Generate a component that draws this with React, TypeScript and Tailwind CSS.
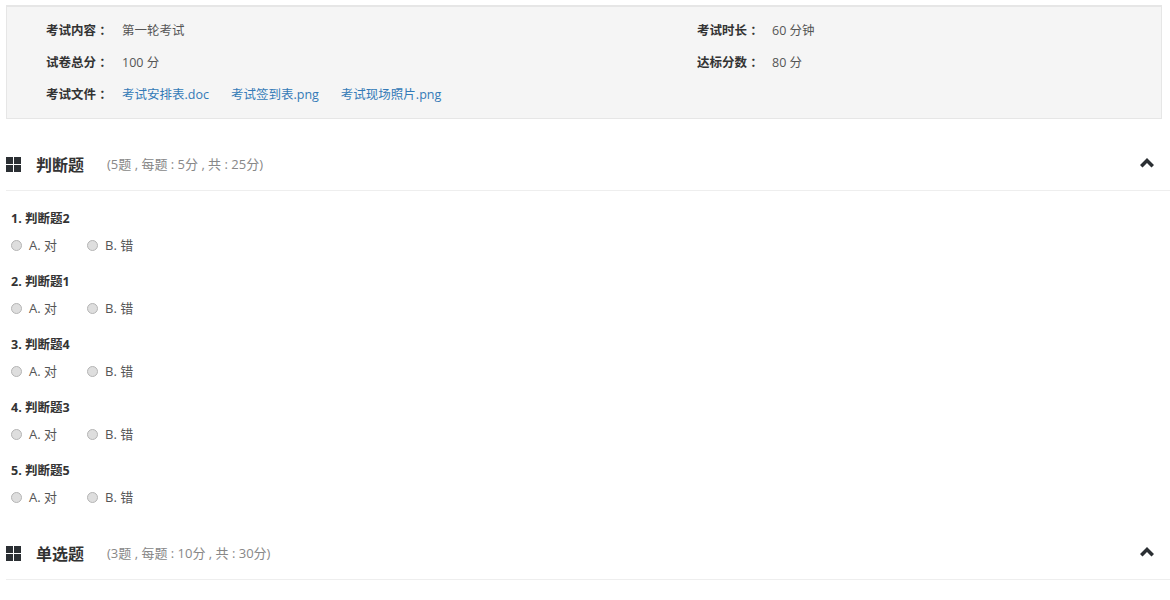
import React from "react";

const font = "font-['Open_Sans','Noto_Sans_CJK_SC',sans-serif]";

function InfoLabel({ children, w = "w-[76px]" }: { children: React.ReactNode; w?: string }) {
  return <span className={`${w} shrink-0 font-bold text-[#333]`}>{children} ：</span>;
}

function GridIcon() {
  return (
    <svg width="15" height="15" viewBox="0 0 15 15" className="mb-[1px] shrink-0">
      <rect x="0" y="0" width="7" height="7" fill="#2b2f33" />
      <rect x="8" y="0" width="7" height="7" fill="#2b2f33" />
      <rect x="0" y="8" width="7" height="7" fill="#2b2f33" />
      <rect x="8" y="8" width="7" height="7" fill="#2b2f33" />
    </svg>
  );
}

function ChevronUp() {
  return (
    <svg width="14" height="10" viewBox="0 0 14 10" className="mb-[3px] ml-auto shrink-0">
      <polygon points="7,0 14,7 11.5,9.5 7,5 2.5,9.5 0,7" fill="#2b2f33" />
    </svg>
  );
}

function SectionHeader({ title, sub }: { title: string; sub: string }) {
  return (
    <div className="flex h-[52px] items-center border-b border-[#eeeeee] pr-[16px]">
      <GridIcon />
      <span className="ml-[15px] text-[16px] font-bold text-[#333]">{title}</span>
      <span className="ml-[23px] text-[13px] text-[#888]">{sub}</span>
      <ChevronUp />
    </div>
  );
}

function Radio({ label }: { label: string }) {
  return (
    <span className="flex items-center">
      <span className="h-[11px] w-[11px] rounded-full border border-[#b5b5b5] bg-[#dedede]" />
      <span className="ml-[7px] text-[13px] text-[#555]">{label}</span>
    </span>
  );
}

function Question({ title }: { title: string }) {
  return (
    <div className="h-[63px] pl-[5px]">
      <div className="flex h-[27px] items-center pt-[2px] text-[12.5px] font-bold text-[#333]">{title}</div>
      <div className="flex h-[27px] items-center">
        <div className="w-[76px]">
          <Radio label="A. 对" />
        </div>
        <Radio label="B. 错" />
      </div>
    </div>
  );
}

export default function App() {
  return (
    <div className={`${font} h-[600px] w-[1170px] overflow-hidden bg-white pl-[6px] pt-[5px]`}>
      <div className="mr-[8px] h-[114px] border border-t-2 border-[#e6e6e6] bg-[#f5f5f5] pl-[39px] pt-[8px] text-[12.5px] text-[#555]">
        <div className="flex h-[32px] items-center">
          <div className="flex w-[651px] items-center">
            <InfoLabel>考试内容</InfoLabel>
            <span>第一轮考试</span>
          </div>
          <InfoLabel w="w-[75px]">考试时长</InfoLabel>
          <span>60 分钟</span>
        </div>
        <div className="flex h-[32px] items-center">
          <div className="flex w-[651px] items-center">
            <InfoLabel>试卷总分</InfoLabel>
            <span>100 分</span>
          </div>
          <InfoLabel w="w-[75px]">达标分数</InfoLabel>
          <span>80 分</span>
        </div>
        <div className="flex h-[32px] items-center text-[#337ab7]">
          <InfoLabel>考试文件</InfoLabel>
          <a className="mr-[22px]">考试安排表.doc</a>
          <a className="mr-[22px]">考试签到表.png</a>
          <a>考试现场照片.png</a>
        </div>
      </div>
      <div className="mt-[20px]">
        <SectionHeader title="判断题" sub="(5题 , 每题 : 5分 , 共 : 25分)" />
      </div>
      <div className="pt-[14px]">
        <Question title="1. 判断题2" />
        <Question title="2. 判断题1" />
        <Question title="3. 判断题4" />
        <Question title="4. 判断题3" />
        <Question title="5. 判断题5" />
      </div>
      <div className="mt-[8px]">
        <SectionHeader title="单选题" sub="(3题 , 每题 : 10分 , 共 : 30分)" />
      </div>
    </div>
  );
}
